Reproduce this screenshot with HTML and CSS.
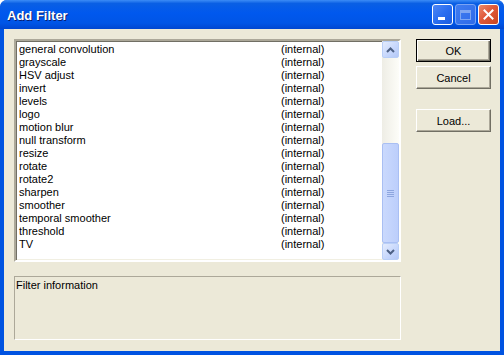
FILE: index.html
```html
<!DOCTYPE html>
<html lang="en">
<head>
  <meta charset="UTF-8" />
  <title>Add Filter</title>
  <link rel="stylesheet" href="styles.css">
</head>
<body>

<div class="window">
  <div class="titlebar">
    <span class="title">Add Filter</span>
    <div class="caption-buttons">
      <button class="cap-btn minimize"><span class="min-bar"></span></button>
      <button class="cap-btn maximize disabled"><span class="max-box"></span></button>
      <button class="cap-btn close">
        <svg width="11" height="11" viewBox="0 0 11 11">
          <path d="M1.5 1.5 L9.5 9.5 M9.5 1.5 L1.5 9.5" stroke="#fff" stroke-width="2" stroke-linecap="square" />
        </svg>
      </button>
    </div>
  </div>

  <div class="client">
    <div class="left-col">
      <!-- Filter list -->
      <div class="listbox">
        <ul class="filter-list" id="filterList"></ul>
        <div class="scrollbar">
          <div class="sb-btn">
            <svg width="9" height="6" viewBox="0 0 9 6"><path d="M1 5 L4.5 1.5 L8 5" fill="none" stroke="#4d6185" stroke-width="2"/></svg>
          </div>
          <div class="sb-track">
            <div class="sb-thumb">
              <span class="grip"></span><span class="grip"></span><span class="grip"></span><span class="grip"></span>
            </div>
          </div>
          <div class="sb-btn">
            <svg width="9" height="6" viewBox="0 0 9 6"><path d="M1 1 L4.5 4.5 L8 1" fill="none" stroke="#4d6185" stroke-width="2"/></svg>
          </div>
        </div>
      </div>

      <!-- Info -->
      <div class="info-box">Filter information</div>
    </div>

    <div class="right-col">
      <button class="btn default">OK</button>
      <button class="btn">Cancel</button>
      <button class="btn load-btn">Load...</button>
    </div>
  </div>
</div>

<script>
  const filters = [
    "general convolution", "grayscale", "HSV adjust", "invert", "levels", "logo",
    "motion blur", "null transform", "resize", "rotate", "rotate2", "sharpen",
    "smoother", "temporal smoother", "threshold", "TV"
  ];

  const list = document.getElementById("filterList");
  filters.forEach(name => {
    const li = document.createElement("li");
    const a = document.createElement("span");
    const b = document.createElement("span");
    a.textContent = name;
    b.textContent = "(internal)";
    li.appendChild(a);
    li.appendChild(b);
    list.appendChild(li);
  });
</script>

</body>
</html>
```

FILE: styles.css
```css
* {
  box-sizing: border-box;
}

body {
  margin: 0;
  background: #fff;
  font-family: 'Liberation Sans', Arial, sans-serif;
  font-size: 11px;
}

.window {
  width: 504px;
  height: 355px;
  display: flex;
  flex-direction: column;
  background: #0053e1;
  border-radius: 7px 7px 0 0;
  overflow: hidden;
}

.titlebar {
  height: 29px;
  display: flex;
  align-items: center;
  justify-content: space-between;
  padding: 0 5px 0 7px;
  background: linear-gradient(to bottom, #3c8cf6 0%, #0a5fe4 12%, #0058ee 45%, #0055e6 80%, #0046d0 100%);
}

.title {
  color: #fff;
  font-weight: bold;
  font-size: 13px;
  text-shadow: 1px 1px 0 #0a1e6e;
  margin-top: 1px;
}

.caption-buttons {
  display: flex;
  gap: 2px;
}

.cap-btn {
  width: 21px;
  height: 21px;
  padding: 0;
  border: 1px solid #fff;
  border-radius: 3px;
  background: linear-gradient(135deg, #4e86f4 0%, #2a6ef0 50%, #1c5ce0 100%);
  display: flex;
  align-items: center;
  justify-content: center;
  position: relative;
}

.min-bar {
  position: absolute;
  left: 5px;
  bottom: 4px;
  width: 7px;
  height: 3px;
  background: #fff;
}

.maximize.disabled {
  border-color: #7aa4f4;
  background: linear-gradient(135deg, #3f7cf0 0%, #2f6bea 100%);
}

.max-box {
  width: 11px;
  height: 10px;
  border: 1px solid #7ea6f2;
  border-top-width: 3px;
}

.close {
  background: linear-gradient(135deg, #ec8a6c 0%, #e0593a 45%, #c94420 100%);
}

.client {
  flex: 1;
  margin: 0 4px 4px 4px;
  background: #ece9d8;
  display: flex;
  padding: 10px 9px 11px 10px;
  gap: 15px;
}

.left-col {
  width: 388px;
  display: flex;
  flex-direction: column;
  gap: 14px;
}

.listbox {
  height: 223px;
  display: flex;
  background: #fff;
  border: 2px solid;
  border-color: #aca899 #fff #fff #aca899;
  box-shadow: inset 1px 1px 0 #716f64, inset -1px -1px 0 #f1efe2;
}

.filter-list {
  flex: 1;
  list-style: none;
  margin: 0;
  padding: 2px 0 0 1px;
  color: #000;
}

.filter-list li {
  display: grid;
  grid-template-columns: 262px 1fr;
  height: 13px;
  line-height: 13px;
  padding-left: 2px;
}

.scrollbar {
  width: 17px;
  display: flex;
  flex-direction: column;
  background: linear-gradient(to right, #eeede5, #fdfdf8);
}

.sb-btn {
  height: 17px;
  display: flex;
  align-items: center;
  justify-content: center;
  border: 1px solid #b9cff7;
  border-radius: 2px;
  background: linear-gradient(135deg, #e4ecfd 0%, #c5d6fc 60%, #b4c8f6 100%);
}

.sb-track {
  flex: 1;
  display: flex;
  flex-direction: column;
}

.sb-thumb {
  margin-top: 85px;
  flex: 1;
  border: 1px solid #a9bff3;
  border-radius: 2px;
  background: linear-gradient(to right, #cad9fd, #bccefb);
  display: flex;
  flex-direction: column;
  align-items: center;
  justify-content: center;
  gap: 1px;
}

.grip {
  width: 7px;
  height: 1px;
  background: #8ea6df;
}

.info-box {
  height: 64px;
  border: 1px solid;
  border-color: #aca899 #fff #fff #aca899;
  padding: 2px 1px;
  color: #000;
}

.right-col {
  display: flex;
  flex-direction: column;
  gap: 4px;
}

.btn {
  width: 75px;
  height: 23px;
  font-family: inherit;
  font-size: 11px;
  color: #000;
  background: #ece9d8;
  border: 1px solid;
  border-color: #fff #716f64 #716f64 #fff;
  box-shadow: inset -1px -1px 0 #aca899;
  padding: 0;
}

.btn.default {
  border: 1px solid #000;
  box-shadow: inset 1px 1px 0 #fff, inset -1px -1px 0 #716f64, inset -2px -2px 0 #aca899;
}

.load-btn {
  margin-top: 16px;
}
```
